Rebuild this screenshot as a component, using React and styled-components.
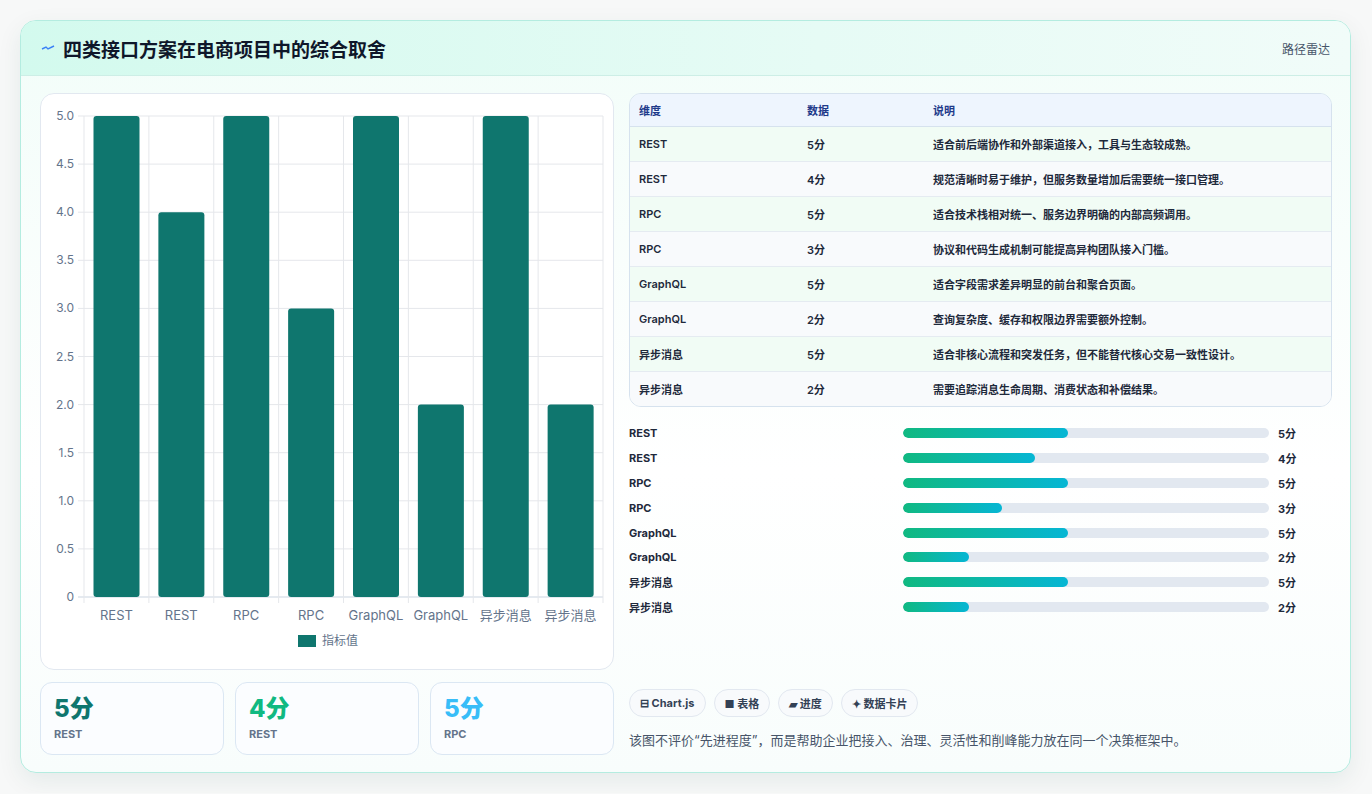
import React from 'react'
import styled, { createGlobalStyle } from 'styled-components'

const Global = createGlobalStyle`
  body { margin: 0; background: #f7f8f8; font-family: Inter, "Noto Sans CJK SC", sans-serif; }
`

const Shell = styled.div`
  margin: 20px;
  width: 1331px;
  height: 753px;
  box-sizing: border-box;
  border: 1px solid #b4ece0;
  border-radius: 16px;
  overflow: hidden;
  background: linear-gradient(180deg, #f2fdf9 0%, #ffffff 60%, #f8fdfc 100%);
  box-shadow: 0 8px 24px rgba(15, 80, 70, 0.08);
  display: flex;
  flex-direction: column;
`

const Header = styled.div`
  height: 55px;
  flex: none;
  box-sizing: border-box;
  padding: 0 20px 0 20px;
  display: flex;
  align-items: center;
  justify-content: space-between;
  background: linear-gradient(90deg, #d3faee 0%, #e6fbf5 60%, #f1fcf9 100%);
  border-bottom: 1px solid #cdeee6;
`

const Title = styled.h1`
  margin: 0;
  font-size: 19px;
  font-weight: 700;
  color: #0f172a;
  display: flex;
  align-items: center;
  gap: 8px;
`

const Tag = styled.span`
  font-size: 12px;
  color: #475569;
`

const Body = styled.div`
  flex: 1;
  display: grid;
  grid-template-columns: 574px 703px;
  gap: 15px;
  padding: 17px 19px 18px 19px;
`

const Col = styled.div`
  display: flex;
  flex-direction: column;
  gap: 12px;
`

const ChartCard = styled.div`
  height: 577px;
  box-sizing: border-box;
  border: 1px solid #e2e8f0;
  border-radius: 14px;
  background: #fff;
`

const Stats = styled.div`
  display: grid;
  grid-template-columns: repeat(3, 1fr);
  gap: 11px;
`

const Stat = styled.div`
  height: 73px;
  box-sizing: border-box;
  border: 1px solid #dbe7f3;
  border-radius: 12px;
  background: #fbfdff;
  padding: 11px 13px;
`

const StatValue = styled.div`
  font-size: 24px;
  font-weight: 800;
  line-height: 30px;
  color: ${p => p.$color};
`

const StatLabel = styled.div`
  font-size: 11px;
  font-weight: 700;
  color: #64748b;
  margin-top: 3px;
`

const Table = styled.table`
  width: 100%;
  border-collapse: separate;
  border-spacing: 0;
  border: 1px solid #d6e2ee;
  border-radius: 12px;
  overflow: hidden;
  font-size: 11px;
  font-weight: 600;
  color: #1e293b;
  th {
    text-align: left;
    height: 32px;
    padding: 0 9px;
    color: #1e3a8a;
    background: #eef5fe;
    border-bottom: 1px solid #d6e2ee;
    font-weight: 600;
  }
  td {
    height: 34px;
    padding: 0 9px;
    border-bottom: 1px solid #e5ebf1;
  }
  tr:last-child td { border-bottom: none; }
  tbody tr:nth-child(odd) td { background: #f1fcf5; }
  tbody tr:nth-child(even) td { background: #f8fafc; }
`

const Bars = styled.div`
  display: flex;
  flex-direction: column;
  margin-top: 2px;
`

const BarRow = styled.div`
  display: grid;
  grid-template-columns: 265px 366px 40px;
  align-items: center;
  gap: 0 9px;
  height: 24.8px;
  font-size: 11px;
  font-weight: 700;
  color: #1e293b;
`

const Track = styled.div`
  height: 10px;
  border-radius: 5px;
  background: #e2e8f0;
  overflow: hidden;
`

const Fill = styled.div`
  height: 100%;
  border-radius: 5px;
  background: linear-gradient(90deg, #10b981, #06b6d4);
`

const Foot = styled.div`
  margin-top: auto;
  display: flex;
  flex-direction: column;
  gap: 13px;
  padding-bottom: 6px;
`

const Chips = styled.div`
  display: flex;
  gap: 8px;
`

const Chip = styled.span`
  height: 28px;
  box-sizing: border-box;
  padding: 0 10px;
  display: inline-flex;
  align-items: center;
  gap: 4px;
  border: 1px solid #e2e8f0;
  border-radius: 14px;
  background: #f8fafc;
  font-size: 11px;
  font-weight: 700;
  color: #334155;
`

const Caption = styled.p`
  margin: 0;
  font-size: 13px;
  color: #475569;
`

const data = [
  ['REST', 5, '适合前后端协作和外部渠道接入，工具与生态较成熟。'],
  ['REST', 4, '规范清晰时易于维护，但服务数量增加后需要统一接口管理。'],
  ['RPC', 5, '适合技术栈相对统一、服务边界明确的内部高频调用。'],
  ['RPC', 3, '协议和代码生成机制可能提高异构团队接入门槛。'],
  ['GraphQL', 5, '适合字段需求差异明显的前台和聚合页面。'],
  ['GraphQL', 2, '查询复杂度、缓存和权限边界需要额外控制。'],
  ['异步消息', 5, '适合非核心流程和突发任务，但不能替代核心交易一致性设计。'],
  ['异步消息', 2, '需要追踪消息生命周期、消费状态和补偿结果。'],
]

const BarChart = () => {
  const L = 43, R = 562, T = 22, B = 503
  const cw = (R - L) / 8
  const ticks = [0, 0.5, 1, 1.5, 2, 2.5, 3, 3.5, 4, 4.5, 5]
  const y = v => B - (v / 5) * (B - T)
  return (
    <svg width="572" height="575" style={{ display: 'block' }}>
      {ticks.map(t => (
        <g key={t}>
          <line x1={L - 6} x2={R} y1={y(t)} y2={y(t)} stroke={t === 0 ? '#cbd5e1' : '#e5e7eb'} />
          <text x={L - 10} y={y(t) + 4} textAnchor="end" fontSize="12" fill="#64748b" fontFamily="Inter, sans-serif">
            {t === 0 ? '0' : t.toFixed(1)}
          </text>
        </g>
      ))}
      {Array.from({ length: 9 }).map((_, i) => (
        <line key={i} x1={L + i * cw} x2={L + i * cw} y1={T} y2={B + 6} stroke="#e5e7eb" />
      ))}
      {data.map((d, i) => (
        <g key={i}>
          <rect x={L + i * cw + 9.5} y={y(d[1])} width={46} height={B - y(d[1])} rx="3" fill="#0f766e" />
          <text x={L + i * cw + cw / 2} y={B + 23} textAnchor="middle" fontSize="13" fill="#64748b" fontFamily="Inter, 'Noto Sans CJK SC', sans-serif">
            {d[0]}
          </text>
        </g>
      ))}
      <rect x="257" y="541" width="18" height="12" fill="#0f766e" />
      <text x="281" y="551" fontSize="12" fill="#64748b" fontFamily="'Noto Sans CJK SC', sans-serif">指标值</text>
    </svg>
  )
}

export default function App() {
  return (
    <>
      <Global />
      <Shell>
        <Header>
          <Title>
            <svg width="14" height="10" viewBox="0 0 14 10">
              <path d="M1 6 L5 4 L7 6 L13 3" stroke="#3b82f6" strokeWidth="1.4" fill="none" />
            </svg>
            四类接口方案在电商项目中的综合取舍
          </Title>
          <Tag>路径雷达</Tag>
        </Header>
        <Body>
          <Col>
            <ChartCard><BarChart /></ChartCard>
            <Stats>
              <Stat><StatValue $color="#0f766e">5分</StatValue><StatLabel>REST</StatLabel></Stat>
              <Stat><StatValue $color="#10b981">4分</StatValue><StatLabel>REST</StatLabel></Stat>
              <Stat><StatValue $color="#38bdf8">5分</StatValue><StatLabel>RPC</StatLabel></Stat>
            </Stats>
          </Col>
          <Col>
            <Table>
              <thead>
                <tr><th style={{ width: 150 }}>维度</th><th style={{ width: 108 }}>数据</th><th>说明</th></tr>
              </thead>
              <tbody>
                {data.map((d, i) => (
                  <tr key={i}><td>{d[0]}</td><td>{d[1]}分</td><td>{d[2]}</td></tr>
                ))}
              </tbody>
            </Table>
            <Bars>
              {data.map((d, i) => (
                <BarRow key={i}>
                  <span>{d[0]}</span>
                  <Track><Fill style={{ width: `${d[1] * 9}%` }} /></Track>
                  <span>{d[1]}分</span>
                </BarRow>
              ))}
            </Bars>
            <Foot>
              <Chips>
                <Chip>⊟ Chart.js</Chip>
                <Chip>■ 表格</Chip>
                <Chip>▰ 进度</Chip>
                <Chip>✦ 数据卡片</Chip>
              </Chips>
              <Caption>该图不评价“先进程度”，而是帮助企业把接入、治理、灵活性和削峰能力放在同一个决策框架中。</Caption>
            </Foot>
          </Col>
        </Body>
      </Shell>
    </>
  )
}
